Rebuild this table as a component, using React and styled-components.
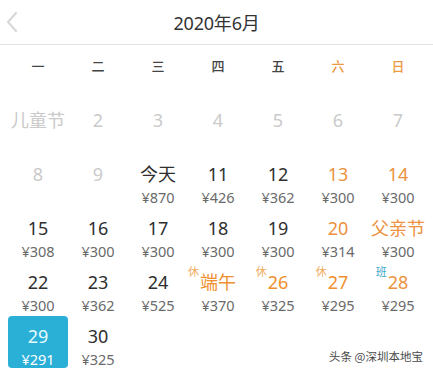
import React from "react";
import styled, { createGlobalStyle } from "styled-components";

const Global = createGlobalStyle`
  html, body { margin: 0; padding: 0; background: #fff; }
  body { font-family: "Noto Sans", "Noto Sans CJK SC", sans-serif; }
`;

const Page = styled.div`
  position: relative;
  width: 433px;
  height: 372px;
  overflow: hidden;
  background: #fff;
`;

const Header = styled.div`
  display: grid;
  grid-template-columns: 40px 1fr 40px;
  align-items: center;
  height: 44px;
  border-bottom: 1px solid #e3e3e3;
`;

const Back = styled.div`
  display: flex;
  align-items: center;
  padding-left: 5px;
  color: #d8d8d8;
`;

const Title = styled.div`
  text-align: center;
  font-family: "Noto Sans", "Noto Sans CJK SC", sans-serif;
  font-size: 18px;
  color: #333;
  letter-spacing: -0.2px;
`;

const Grid = styled.div`
  display: grid;
  grid-template-columns: repeat(7, 60px);
  margin-left: 8px;
`;

const WeekRow = styled(Grid)`
  height: 40px;
  align-items: center;
`;

const WeekDay = styled.div`
  text-align: center;
  font-family: "Noto Sans CJK SC", sans-serif;
  font-size: 13px;
  font-weight: 500;
  color: ${(p) => (p.$weekend ? "#ee9a45" : "#444")};
`;

const Days = styled(Grid)`
  padding-top: 15px;
  row-gap: 2px;
  grid-auto-rows: 52px;
`;

const Cell = styled.div`
  display: flex;
  flex-direction: column;
  align-items: center;
  padding-top: 8px;
  box-sizing: border-box;
  border-radius: 4px;
  background: ${(p) => (p.$selected ? "#2aafd7" : "transparent")};
`;

const colorFor = (t) =>
  ({ past: "#cacaca", normal: "#2e2e2e", weekend: "#ec9240", holiday: "#ef8f2e", selected: "#e6fbff" }[t]);

const Num = styled.span`
  position: relative;
  display: inline-block;
  font-family: "Noto Sans", "Noto Sans CJK SC", sans-serif;
  font-size: 18px;
  line-height: 25px;
  color: ${(p) => colorFor(p.$tone)};
`;

const Tag = styled.span`
  position: absolute;
  right: 100%;
  top: -7px;
  margin-right: 1px;
  font-family: "Noto Sans CJK SC", sans-serif;
  font-size: 11px;
  line-height: 16px;
  color: ${(p) => (p.$work ? "#3aa7c8" : "#f0ad5e")};
`;

const Price = styled.span`
  font-family: "Noto Sans", "Noto Sans CJK SC", sans-serif;
  font-size: 14.5px;
  line-height: 20px;
  color: ${(p) => (p.$selected ? "#fff" : "#6a6a6a")};
`;

const Watermark = styled.div`
  position: absolute;
  right: 10px;
  bottom: 8px;
  font-family: "Noto Sans CJK SC", sans-serif;
  font-size: 11.5px;
  color: #4a4a4a;
  text-shadow: 0 0 1px #fff;
`;

const weekdays = ["一", "二", "三", "四", "五", "六", "日"];

const days = [
  { n: "儿童节", t: "past" },
  { n: "2", t: "past" },
  { n: "3", t: "past" },
  { n: "4", t: "past" },
  { n: "5", t: "past" },
  { n: "6", t: "past" },
  { n: "7", t: "past" },
  { n: "8", t: "past" },
  { n: "9", t: "past" },
  { n: "今天", t: "normal", p: "870" },
  { n: "11", t: "normal", p: "426" },
  { n: "12", t: "normal", p: "362" },
  { n: "13", t: "weekend", p: "300" },
  { n: "14", t: "weekend", p: "300" },
  { n: "15", t: "normal", p: "308" },
  { n: "16", t: "normal", p: "300" },
  { n: "17", t: "normal", p: "300" },
  { n: "18", t: "normal", p: "300" },
  { n: "19", t: "normal", p: "300" },
  { n: "20", t: "weekend", p: "314" },
  { n: "父亲节", t: "weekend", p: "300" },
  { n: "22", t: "normal", p: "300" },
  { n: "23", t: "normal", p: "362" },
  { n: "24", t: "normal", p: "525" },
  { n: "端午", t: "holiday", p: "370", tag: "休" },
  { n: "26", t: "holiday", p: "325", tag: "休" },
  { n: "27", t: "holiday", p: "295", tag: "休" },
  { n: "28", t: "weekend", p: "295", tag: "班", work: true },
  { n: "29", t: "selected", p: "291", sel: true },
  { n: "30", t: "normal", p: "325" },
];

const Chevron = () => (
  <svg width="14" height="22" viewBox="0 0 14 22" fill="none">
    <path d="M11 2 L3 11 L11 20" stroke="currentColor" strokeWidth="2.2" strokeLinecap="round" strokeLinejoin="round" />
  </svg>
);

export default function App() {
  return (
    <Page>
      <Global />
      <Header>
        <Back>
          <Chevron />
        </Back>
        <Title>2020年6月</Title>
        <span />
      </Header>
      <WeekRow>
        {weekdays.map((w, i) => (
          <WeekDay key={w} $weekend={i >= 5}>
            {w}
          </WeekDay>
        ))}
      </WeekRow>
      <Days>
        {days.map((d, i) => (
          <Cell key={i} $selected={d.sel}>
            <Num $tone={d.t}>
              {d.tag && <Tag $work={d.work}>{d.tag}</Tag>}
              {d.n}
            </Num>
            {d.p && <Price $selected={d.sel}>¥{d.p}</Price>}
          </Cell>
        ))}
      </Days>
      <Watermark>头条 @深圳本地宝</Watermark>
    </Page>
  );
}
